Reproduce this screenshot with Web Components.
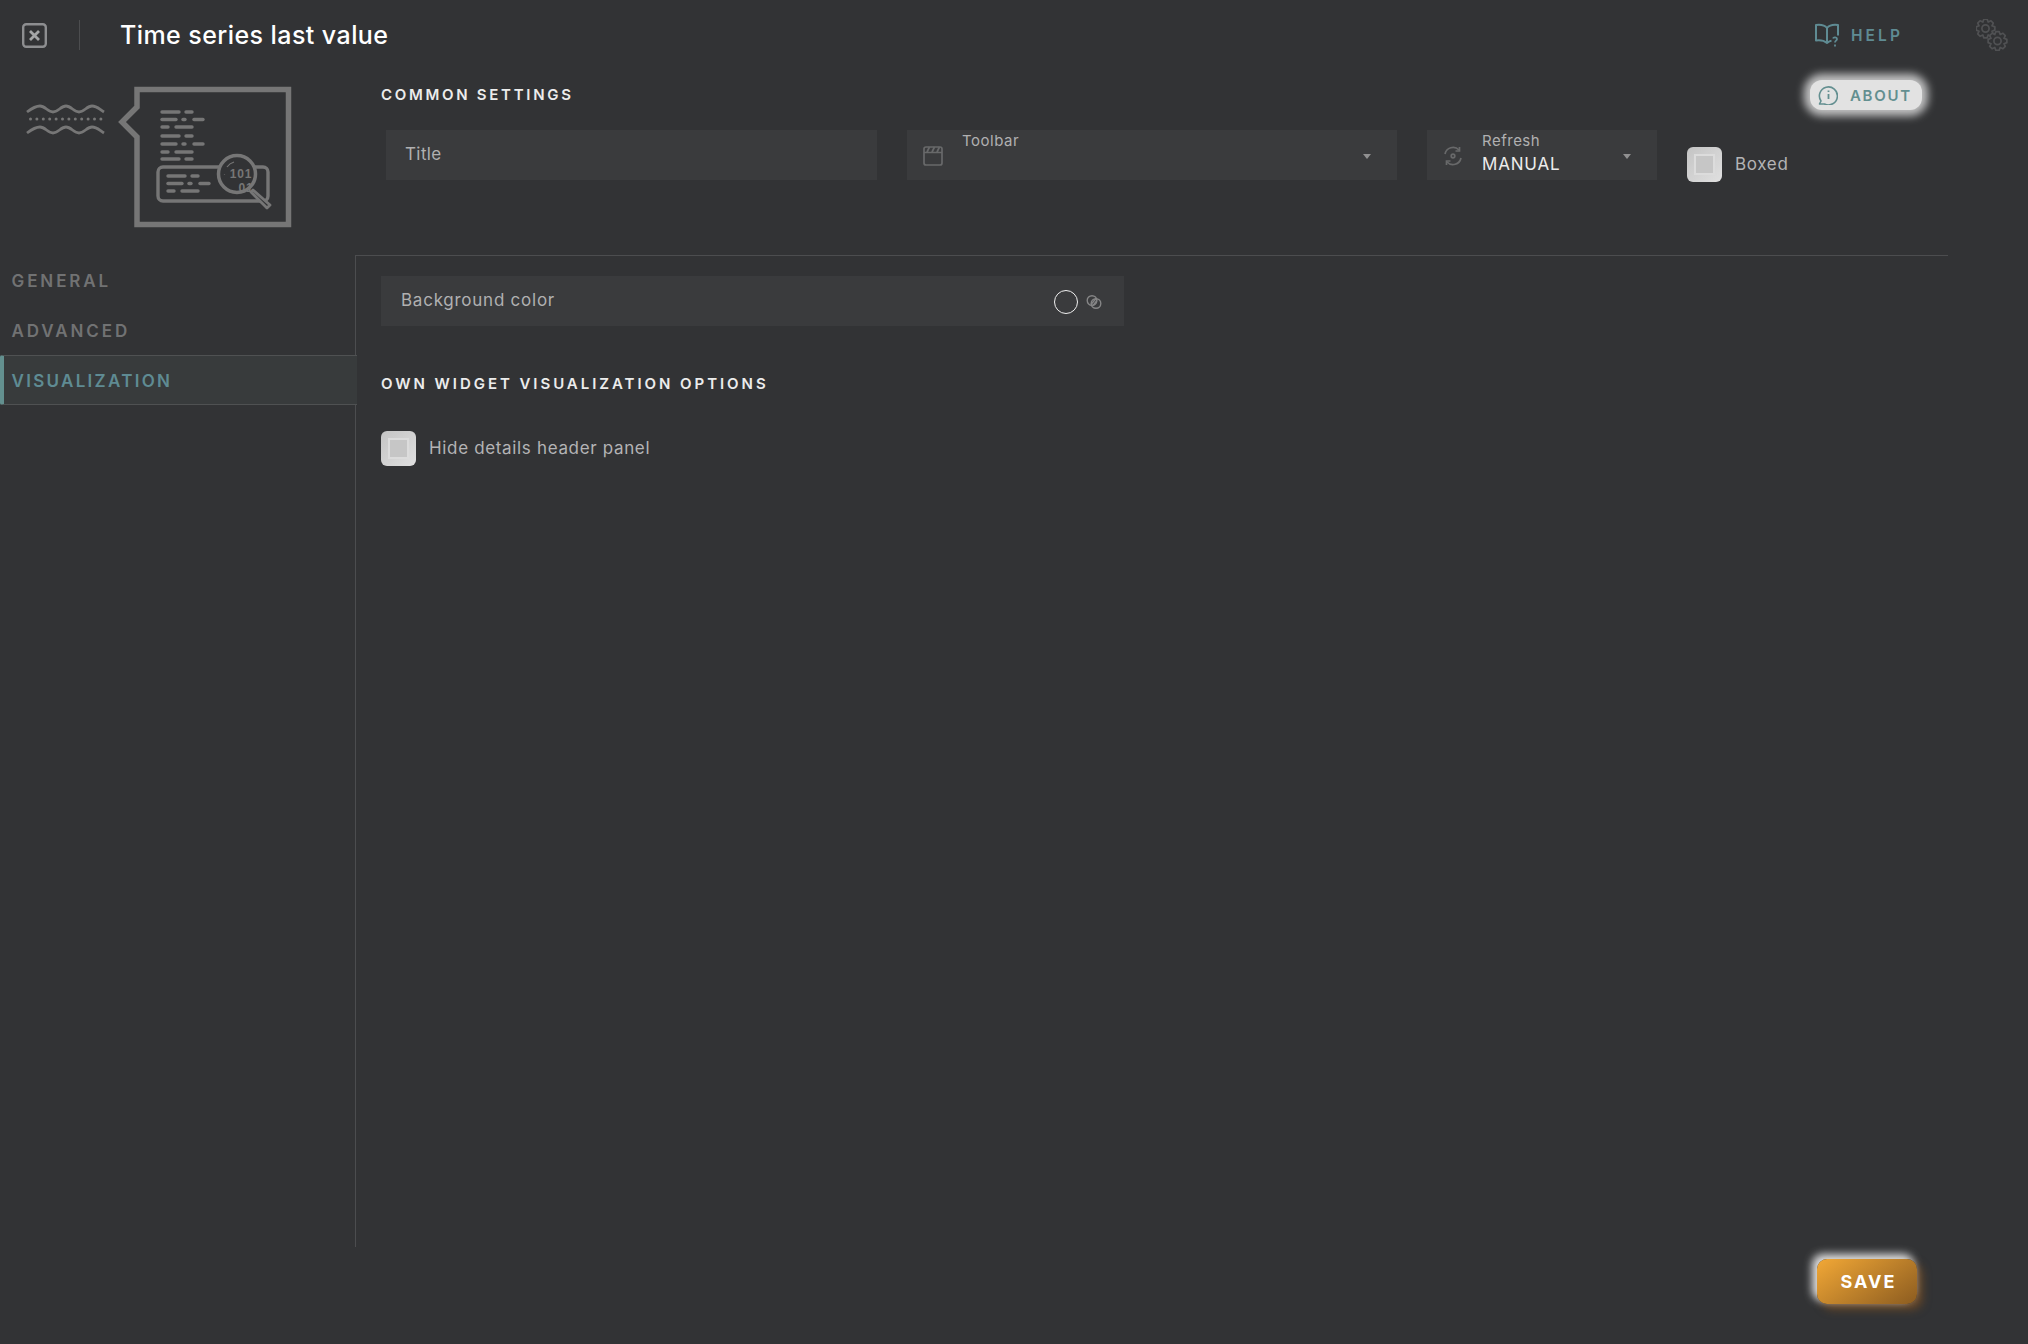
<!DOCTYPE html>
<html>
<head>
<meta charset="utf-8">
<title>Time series last value</title>
<style>
    html, body { margin:0; padding:0; background:#323335; }
    body { font-family:Inter, "Liberation Sans", sans-serif; }
</style>
</head>
<body>
<widget-editor>
    <top-bar slot="top" heading="Time series last value"></top-bar>
    <widget-logo slot="logo"></widget-logo>
    <common-settings slot="common"></common-settings>
    <side-nav slot="nav">
        <nav-item>GENERAL</nav-item>
        <nav-item>ADVANCED</nav-item>
        <nav-item selected>VISUALIZATION</nav-item>
    </side-nav>
    <div slot="content">
        <color-field>Background color</color-field>
        <section-title style="margin-top:49px;letter-spacing:2.95px">OWN WIDGET VISUALIZATION OPTIONS</section-title>
        <check-field style="margin-top:38px">Hide details header panel</check-field>
    </div>
    <save-button slot="footer">SAVE</save-button>
</widget-editor>

<script>
class WidgetEditor extends HTMLElement{
    constructor(){
        super();
        this.attachShadow({mode:'open'}).innerHTML = `
            <style>
                :host { display:block; width:2028px; height:1344px; color:#fff; overflow:hidden; }
                .head { display:grid; grid-template-columns:355px 1593px; height:185px; }
                .common { border-bottom:1px solid #4c4d4f; box-sizing:border-box; height:186px; }
                .body { display:grid; grid-template-columns:355px 1593px; height:992px; }
                .content { border-left:1px solid #4c4d4f; padding:21px 0 0 25px; }
                .foot { display:flex; justify-content:flex-end; padding:12px 111px 0 0; }
            </style>
            <slot name="top"></slot>
            <div class="head"><div><slot name="logo"></slot></div><div class="common"><slot name="common"></slot></div></div>
            <div class="body"><div><slot name="nav"></slot></div><div class="content"><slot name="content"></slot></div></div>
            <div class="foot"><slot name="footer"></slot></div>`;
    }
}

// outline of a small toothed wheel for the settings icon
function gearPath(cx, cy, outer, inner, teeth){
    let d = '';
    const step = Math.PI * 2 / teeth;
    for(let i = 0; i < teeth; i++){
        const a = i * step;
        const pts = [[inner, a - step*.5], [outer, a - step*.22], [outer, a + step*.22]];
        pts.forEach((p, n) => {
            const x = (cx + p[0]*Math.cos(p[1])).toFixed(2);
            const y = (cy + p[0]*Math.sin(p[1])).toFixed(2);
            d += (i === 0 && n === 0 ? 'M' : 'L') + x + ' ' + y;
        });
    }
    return d + 'Z';
}

class TopBar extends HTMLElement{
    constructor(){
        super();
        this.attachShadow({mode:'open'}).innerHTML = `
            <style>
                :host { display:flex; align-items:center; height:70px; box-sizing:border-box; padding:0 20px 0 22px; }
                .close { width:25px; height:25px; display:block; }
                .sep { width:1px; height:30px; background:#4c4d4f; margin:0 40px 0 32px; }
                h1 { margin:0; font-size:25px; font-weight:500; color:#fff; letter-spacing:.43px; flex:1; }
                .help { display:flex; align-items:center; gap:11px; color:#5f8b93; font-size:15.5px; font-weight:600; letter-spacing:3.1px; margin-right:73px; }
            </style>
            <svg class="close" viewBox="0 0 25 25" fill="none" stroke="#8d8e90"><rect x="1.200" y="1.200" width="22.600" height="22.600" rx="3" stroke-width="2.400"/><path d="M8 8l9 9M17 8l-9 9" stroke="#a4a5a6" stroke-width="2.800"/></svg>
            <div class="sep"></div>
            <h1></h1>
            <div class="help">
                <svg width="25" height="24" viewBox="0 0 25 24" fill="none" stroke="#5f8b93" stroke-width="2" stroke-linejoin="round"><path d="M12 5C10 2.500 5 1.500 1 2v15.500c4-.5 8 0 11 2.500 2-1.500 3-2 4.500-2.200"/><path d="M12 5c2-2.500 7-3.500 11-3v10.500"/><path d="M12 5v15"/><path d="M18 15.500c.5-1.600 4-1.600 4 .6 0 1.600-2 1.600-2 3.400M20 21.500v2" stroke-width="1.800"/></svg>
                <span>HELP</span>
            </div>
            <svg width="32" height="32" viewBox="0 0 32 32" fill="none" stroke="#505153" stroke-width="1.700" stroke-linejoin="round"><path d="${gearPath(9.5,9.5,9.5,7,8)}"/><circle cx="9.500" cy="9.500" r="3.600"/><path d="${gearPath(21.500,22,9.5,7,8)}" fill="#323335"/><circle cx="21.500" cy="22" r="3.600"/></svg>`;
        this.shadowRoot.querySelector('h1').textContent = this.getAttribute('heading');
    }
}

class WidgetLogo extends HTMLElement{
    constructor(){
        super();
        // coords are page pixels, the viewBox starts at the head row origin (0,70)
        const rows = [[112,162,179,186,192],[119.5,162,176,183,185,194,203],[127,162,168,176,192],[136,162,179,186,192],[144,162,176,183,185,194,203],[152,162,168,176,192],[159,162,179,186,192],
                      [176,168,185,192,198],[183.500,168,182,189,191,200,209],[191,168,174,182,198]];
        let lines = '';
        rows.forEach(r => {
            for(let i = 1; i < r.length; i += 2) lines += `<path d="M${r[i]} ${r[0]}H${r[i+1]}"/>`;
        });
        let dots = '';
        for(let i = 0; i < 12; i++) dots += `<circle cx="${30.5 + i*6.4}" cy="119" r="1.500"/>`;
        const wave = y => `M27 ${y}c4-3 8-6 13-6s8 6 13 6 8-6 13-6 8 6 13 6 8-6 13-6 7 3 12 6`;
        this.attachShadow({mode:'open'}).innerHTML = `
            <style>:host { display:block; height:185px; } svg { display:block; }</style>
            <svg width="355" height="185" viewBox="0 70 355 185" fill="none" stroke="#767676">
                <path d="M137 89.500H288.500V224.500H137V137L122 122L137 107Z" stroke-width="5.500"/>
                <path d="${wave(112)}${wave(133)}" stroke-width="2.800"/>
                <g fill="#767676" stroke="none">${dots}</g>
                <g stroke-width="3.400" stroke-linecap="round">${lines}</g>
                <rect x="158" y="167" width="110" height="34" rx="5" stroke-width="3.400"/>
                <circle cx="237" cy="174" r="18.500" fill="#323335" stroke-width="3.500"/>
                <path d="M227 167a13 13 0 0 1 7-5M224.500 174v.5" stroke-width="1.200"/>
                <text x="241" y="177.500" text-anchor="middle" letter-spacing=".8" font-family="'Liberation Sans', sans-serif" font-size="12" font-weight="700" fill="#767676" stroke="none">101</text>
                <text x="246" y="191.500" text-anchor="middle" letter-spacing=".8" font-family="'Liberation Sans', sans-serif" font-size="12" font-weight="700" fill="#767676" stroke="none">01</text>
                <path d="M253 190l17 15-3 3-16-16z" fill="#323335" stroke-width="2.800" stroke-linejoin="round"/>
            </svg>`;
    }
}

class SectionTitle extends HTMLElement{
    constructor(){
        super();
        this.attachShadow({mode:'open'}).innerHTML = `
            <style>:host { display:block; font-size:15px; line-height:18px; font-weight:600; letter-spacing:2.7px; color:#ececec; }</style>
            <slot></slot>`;
    }
}

class CommonSettings extends HTMLElement{
    constructor(){
        super();
        this.attachShadow({mode:'open'}).innerHTML = `
            <style>
                :host { display:block; padding:16px 0 0 26px; }
                .top { display:flex; justify-content:space-between; align-items:center; padding-right:26px; height:18px; }
                .row { display:flex; align-items:flex-start; gap:30px; margin:26px 0 0 5px; }
            </style>
            <div class="top"><section-title>COMMON SETTINGS</section-title><about-pill>ABOUT</about-pill></div>
            <div class="row">
                <text-field style="width:491px">Title</text-field>
                <select-field style="width:490px" label="Toolbar">
                    <svg slot="icon" width="20" height="20" viewBox="0 0 20 20" fill="none" stroke="#68696a" stroke-width="1.700"><rect x="1" y="1" width="18" height="18" rx="2"/><path d="M1 6.500h18M4 6l2.500-5M9 6l2.500-5M14 6l2.500-5"/></svg>
                </select-field>
                <select-field style="width:230px" label="Refresh" value="MANUAL">
                    <svg slot="icon" width="20" height="20" viewBox="0 0 20 20" fill="none" stroke="#68696a" stroke-width="1.700"><path d="M2 8a8.200 8.200 0 0 1 14-4M18 12a8.200 8.200 0 0 1-14 4"/><path d="M16.500 1v4h-4M3.500 19v-4h4"/><circle cx="10" cy="10" r="1.800"/></svg>
                </select-field>
                <check-field style="margin-top:17px">Boxed</check-field>
            </div>`;
    }
}

class AboutPill extends HTMLElement{
    constructor(){
        super();
        this.attachShadow({mode:'open'}).innerHTML = `
            <style>
                :host { display:flex; align-items:center; gap:12px; box-sizing:border-box; width:112px; height:30px; padding:0 0 0 8px; border-radius:12px; background:#e2e2e2; box-shadow:0 0 9px 6px rgba(255,255,255,.7); color:#638f90; font-size:15px; font-weight:600; letter-spacing:1.700px; }
            </style>
            <svg width="20" height="20" viewBox="0 0 20 20" fill="none" stroke="#638f90" stroke-width="1.600"><path d="M1.500 19H6.500A9 9 0 1 0 3 16Z" stroke-linejoin="round"/><path d="M10.500 9v5M10.500 5.500v1.600" stroke-width="1.800"/></svg>
            <slot></slot>`;
    }
}

class TextField extends HTMLElement{
    constructor(){
        super();
        this.attachShadow({mode:'open'}).innerHTML = `
            <style>
                :host { display:flex; align-items:center; box-sizing:border-box; height:50px; padding:0 0 2px 19px; background:#3a3b3d; color:#b0b0b1; font-size:17px; letter-spacing:.4px; }
            </style>
            <slot></slot>`;
    }
}

class SelectField extends HTMLElement{
    constructor(){
        super();
        this.attachShadow({mode:'open'}).innerHTML = `
            <style>
                :host { display:flex; box-sizing:border-box; height:50px; background:#3a3b3d; }
                .icon { flex:none; width:55px; padding:16px 0 0 16px; box-sizing:border-box; }
                .text { flex:1; padding-top:2px; }
                .label { font-size:15px; line-height:18px; color:#b0b0b1; letter-spacing:.5px; }
                .value { font-size:17px; line-height:24px; margin-top:2px; color:#ececec; letter-spacing:.8px; }
                .caret { flex:none; width:0; height:0; margin:24px 26px 0 0; border:4px solid transparent; border-top:5px solid #909091; border-bottom:0; }
            </style>
            <div class="icon"><slot name="icon"></slot></div>
            <div class="text"><div class="label"></div><div class="value"></div></div>
            <div class="caret"></div>`;
        this.shadowRoot.querySelector('.label').textContent = this.getAttribute('label');
        this.shadowRoot.querySelector('.value').textContent = this.getAttribute('value') || '';
    }
}

class CheckField extends HTMLElement{
    constructor(){
        super();
        this.attachShadow({mode:'open'}).innerHTML = `
            <style>
                :host { display:flex; align-items:center; gap:13px; color:#b4b4b5; font-size:17px; letter-spacing:.66px; }
                .box { flex:none; width:35px; height:35px; box-sizing:border-box; border-radius:6px; background:linear-gradient(135deg,#c4c4c4,#e0e0e0); display:flex; align-items:center; justify-content:center; }
                .box i { display:block; width:21px; height:21px; box-sizing:border-box; border:2.500px solid #dcdcdc; background:#c6c6c6; }
                span { padding-bottom:2px; }
            </style>
            <div class="box"><i></i></div>
            <span><slot></slot></span>`;
    }
}

class ColorField extends HTMLElement{
    constructor(){
        super();
        this.attachShadow({mode:'open'}).innerHTML = `
            <style>
                :host { display:flex; align-items:center; box-sizing:border-box; width:743px; height:50px; padding:0 22px 2px 20px; background:#3a3b3d; color:#b0b0b1; font-size:17px; letter-spacing:.75px; }
                span { flex:1; }
                .swatch { width:24px; height:24px; box-sizing:border-box; border:1.500px solid #f0f0f0; border-radius:50%; margin:4px 8px 0 0; }
                svg { margin-top:3px; }
            </style>
            <span><slot></slot></span>
            <div class="swatch"></div>
            <svg width="16" height="16" viewBox="0 0 16 16" fill="none" stroke="#858586" stroke-width="1.400"><circle cx="6" cy="6.500" r="4.800"/><circle cx="10" cy="9.500" r="4.800"/><path d="M5 10.500l5-6M7 11.500l4-5"/></svg>`;
    }
}

class SideNav extends HTMLElement{
    constructor(){
        super();
        this.attachShadow({mode:'open'}).innerHTML = `
            <style>:host { display:block; padding-top:1px; width:357px; position:relative; z-index:1; }</style>
            <slot></slot>`;
    }
}

class NavItem extends HTMLElement{
    constructor(){
        super();
        this.attachShadow({mode:'open'}).innerHTML = `
            <style>
                :host { display:flex; align-items:center; box-sizing:border-box; height:50px; padding-left:11.5px; color:#717273; font-size:17px; font-weight:600; letter-spacing:2.9px; }
                :host([selected]) { height:50px; margin-top:-1px; padding:1px 0 0 7.5px; letter-spacing:2.3px; border-left:4px solid #63908f; border-top:1px solid #4f5152; border-bottom:1px solid #4f5152; background:#383b3c; color:#5f8b93; border-radius:2px 0 0 2px; }
            </style>
            <slot></slot>`;
    }
}

class SaveButton extends HTMLElement{
    constructor(){
        super();
        this.attachShadow({mode:'open'}).innerHTML = `
            <style>
                :host { display:flex; align-items:center; justify-content:center; box-sizing:border-box; width:100px; height:45px; padding-left:3px; border-radius:10px; background:linear-gradient(145deg,#f2a836,#8c5c20); color:#fff; font-size:18px; font-weight:700; letter-spacing:2px; box-shadow:-4px -4px 9px 1px rgba(255,255,255,.85), 5px 5px 10px rgba(168,96,24,.5); }
            </style>
            <slot></slot>`;
    }
}

customElements.define('widget-editor', WidgetEditor);
customElements.define('top-bar', TopBar);
customElements.define('widget-logo', WidgetLogo);
customElements.define('section-title', SectionTitle);
customElements.define('common-settings', CommonSettings);
customElements.define('about-pill', AboutPill);
customElements.define('text-field', TextField);
customElements.define('select-field', SelectField);
customElements.define('check-field', CheckField);
customElements.define('color-field', ColorField);
customElements.define('side-nav', SideNav);
customElements.define('nav-item', NavItem);
customElements.define('save-button', SaveButton);
</script>
</body>
</html>
